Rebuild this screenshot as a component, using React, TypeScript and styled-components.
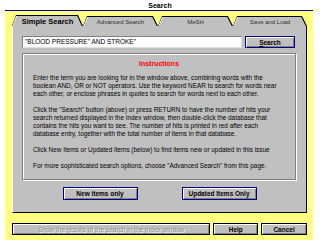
import React from 'react';
import styled, { createGlobalStyle, css } from 'styled-components';

const GlobalStyle = createGlobalStyle`
    * { box-sizing: border-box; }
    body {
        margin: 0;
        background: #fff;
        font-family: "Liberation Sans", Arial, sans-serif;
    }
`;

const Window = styled.div`
    width: 320px;
    height: 240px;
    overflow: hidden;
    background: #fff;
`;

const TitleBar = styled.div`
    height: 10px;
    display: flex;
    align-items: center;
    justify-content: center;
    font-size: 7px;
    font-weight: bold;
    color: #000;
`;

const Frame = styled.div`
    margin-left: 5px;
    width: 308px;
    height: 230px;
    background: #ffff80;
    border-top: 1px solid #000080;
    padding: 4px 6px 0 7px;
`;

const TabRow = styled.div`
    display: flex;
    align-items: flex-end;
    height: 11px;
`;

const trapezoid = css`
    clip-path: polygon(4px 0, calc(100% - 5px) 0, 100% 100%, 0 100%);
`;

const TabEdge = styled.div<{ $width: number; $active?: boolean }>`
    width: ${p => p.$width}px;
    height: ${p => (p.$active ? 11 : 10)}px;
    background: #000;
    ${trapezoid}
`;

const TabLight = styled.div`
    height: 100%;
    margin-right: 1px;
    background: #fff;
    ${trapezoid}
`;

const TabFace = styled.div<{ $active?: boolean }>`
    height: calc(100% - 1px);
    margin: 1px 0 0 1px;
    background: #c0c0c0;
    ${trapezoid}
    display: flex;
    align-items: center;
    justify-content: center;
    padding-top: 1px;
    font-size: ${p => (p.$active ? 7.5 : 6)}px;
    font-weight: ${p => (p.$active ? 'bold' : 'normal')};
    color: ${p => (p.$active ? '#000' : '#303030')};
    white-space: nowrap;
`;

const Panel = styled.div`
    width: 295px;
    height: 187px;
    background: #c0c0c0;
    border-left: 1px solid #fff;
    border-right: 1px solid #000;
    border-bottom: 1px solid #000;
    padding: 10px 0 0 9px;
`;

const SearchRow = styled.div`
    display: flex;
    gap: 3px;
    height: 12px;
`;

const SearchInput = styled.div`
    width: 220px;
    height: 12px;
    background: #fff;
    border-top: 1px solid #808080;
    border-left: 1px solid #808080;
    border-bottom: 1px solid #dfdfdf;
    border-right: 1px solid #dfdfdf;
    font-size: 6.5px;
    line-height: 10px;
    padding-left: 2px;
    color: #000;
    white-space: nowrap;
`;

const Button = styled.div<{ $width: number; $default?: boolean; $disabled?: boolean }>`
    width: ${p => p.$width}px;
    height: 100%;
    display: flex;
    align-items: center;
    justify-content: center;
    background: #c0c0c0;
    border: 1px solid ${p => (p.$default ? '#000080' : '#000')};
    box-shadow: inset 1px 1px 0 #fff, inset -1px -1px 0 #808080;
    font-size: 6.5px;
    font-weight: bold;
    white-space: nowrap;
    color: ${p => (p.$disabled ? '#909090' : '#000')};
    text-shadow: ${p => (p.$disabled ? '1px 1px 0 #fff' : 'none')};
    font-weight: ${p => (p.$disabled ? 'normal' : 'bold')};
`;

const InstructionBox = styled.div`
    margin-top: 5px;
    width: 274px;
    height: 127px;
    border: 1px solid #808080;
    box-shadow: inset 1px 1px 0 #fff, 1px 1px 0 #fff;
    padding: 6px 0 0 10px;
    font-size: 6.4px;
    line-height: 8px;
    color: #000;
`;

const Heading = styled.div`
    text-align: center;
    color: #ff0000;
    font-weight: bold;
    font-size: 7px;
    margin-bottom: 6px;
    padding-right: 10px;
`;

const Para = styled.p`
    margin: 0 0 8px;
    white-space: nowrap;
`;

const ItemRow = styled.div`
    margin-top: 7px;
    margin-left: -9px;
    display: flex;
    justify-content: center;
    gap: 44px;
    height: 13px;
`;

const BottomRow = styled.div`
    margin-top: 10px;
    display: flex;
    height: 12px;
    gap: 3px;
`;

const tabs = [
    { label: 'Simple Search', width: 71, active: true },
    { label: 'Advanced Search', width: 75 },
    { label: 'MeSH', width: 75 },
    { label: 'Save and Load', width: 74 },
];

export default function App() {
    return <>
        <GlobalStyle />
        <Window>
            <TitleBar>Search</TitleBar>
            <Frame>
                <TabRow>
                    {tabs.map(t =>
                        <TabEdge key={t.label} $width={t.width} $active={t.active}>
                            <TabLight>
                                <TabFace $active={t.active}>{t.label}</TabFace>
                            </TabLight>
                        </TabEdge>
                    )}
                </TabRow>
                <Panel>
                    <SearchRow>
                        <SearchInput>"BLOOD PRESSURE" AND STROKE"</SearchInput>
                        <Button $width={50} $default><span><u>S</u>earch</span></Button>
                    </SearchRow>
                    <InstructionBox>
                        <Heading>Instructions</Heading>
                        <Para>
                            Enter the term you are looking for in the window above, combining words with the<br />
                            boolean AND, OR or NOT operators. Use the keyword NEAR to search for words near<br />
                            each other, or enclose phrases in quotes to search for words next to each other.
                        </Para>
                        <Para>
                            Click the "Search" button (above) or press RETURN to have the number of hits your<br />
                            search returned displayed in the Index window, then double-click the database that<br />
                            contains the hits you want to see. The number of hits is printed in red after each<br />
                            database entry, together with the total number of items in that database.
                        </Para>
                        <Para>Click New Items or Updated Items (below) to find items new or updated in this issue</Para>
                        <Para>For more sophisticated search options, choose "Advanced Search" from this page.</Para>
                    </InstructionBox>
                    <ItemRow>
                        <Button $width={75} $default>New items only</Button>
                        <Button $width={75} $default>Updated Items Only</Button>
                    </ItemRow>
                </Panel>
                <BottomRow>
                    <Button $width={199} $disabled>Show the results of the search in the Index window</Button>
                    <Button $width={45}>Help</Button>
                    <Button $width={46}>Cancel</Button>
                </BottomRow>
            </Frame>
        </Window>
    </>;
}
